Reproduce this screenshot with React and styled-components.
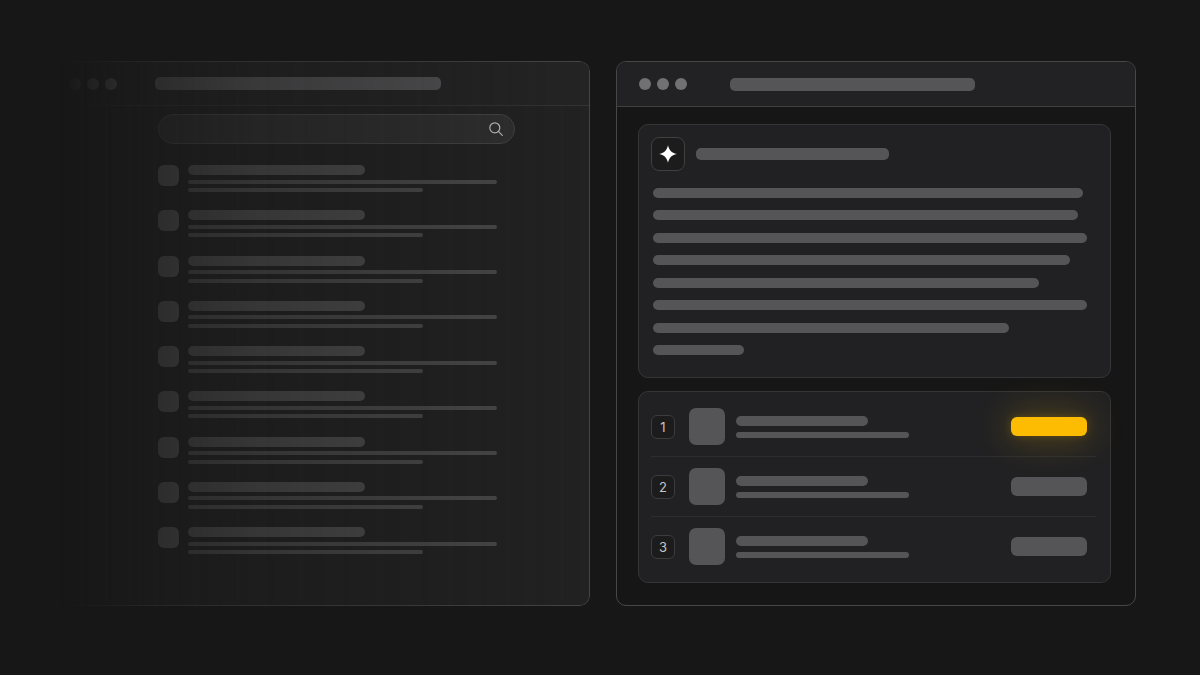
import React from "react";
import styled, { createGlobalStyle } from "styled-components";

const GlobalStyle = createGlobalStyle`
  *, *::before, *::after { box-sizing: border-box; }
  body {
    margin: 0;
    background: #171717;
    color: #c4c4c4;
    font-family: Inter, "Liberation Sans", sans-serif;
  }
`;

const Page = styled.main`
  min-height: 100vh;
  padding: 61px 64px 69px 44px;
  display: grid;
  grid-template-columns: 21fr 20fr;
  align-items: stretch;
  gap: 26px;
`;

const Window = styled.section`
  min-width: 0;
  display: flex;
  flex-direction: column;
  border: 1px solid #474747;
  border-radius: 10px;
  background: #161616;
  overflow: hidden;
`;

const FadedWindow = styled(Window)`
  background: #222222;
  border-color: #454545;
  mask-image: linear-gradient(
    to right,
    transparent 3%,
    rgba(0, 0, 0, 0.34) 20%,
    rgba(0, 0, 0, 0.55) 38%,
    rgba(0, 0, 0, 0.76) 72%,
    #000 100%
  );
`;

const TitleBar = styled.header`
  height: ${(p) => p.$height}px;
  padding: 0 ${(p) => p.$inset}px;
  display: flex;
  align-items: center;
  gap: ${(p) => p.$gap}px;
  background: ${(p) => p.$background};
  border-bottom: 1px solid ${(p) => p.$line};
`;

const Dots = styled.div`
  display: flex;
  gap: 6px;
`;

const Dot = styled.span`
  width: 12px;
  height: 12px;
  border-radius: 50%;
  background: #717173;
`;

const Bar = styled.div`
  width: ${(p) => p.$width};
  max-width: 100%;
  height: ${(p) => p.$height}px;
  border-radius: 5px;
  background: ${(p) => p.$color || "#555557"};
`;

const ResultsBody = styled.div`
  flex: 1;
  display: flex;
  flex-direction: column;
  gap: 21px;
  padding: 8px 74px 51px 113px;
`;

const SearchBox = styled.label`
  height: 30px;
  display: flex;
  align-items: center;
  padding: 0 11px 0 16px;
  border: 1px solid #464646;
  border-radius: 15px;
  background: #303030;
  color: #c8c8c8;
`;

const SearchInput = styled.input`
  flex: 1;
  min-width: 0;
  border: 0;
  outline: 0;
  padding: 0;
  background: transparent;
  color: inherit;
  font: inherit;
  font-size: 13px;
`;

const ResultList = styled.ul`
  flex: 1;
  margin: 0;
  padding: 0;
  list-style: none;
  display: flex;
  flex-direction: column;
  justify-content: space-between;
`;

const Result = styled.li`
  height: 27px;
  display: flex;
  align-items: flex-start;
  gap: 9px;
  padding-right: 18px;
`;

const Favicon = styled.span`
  flex: none;
  width: 21px;
  height: 21px;
  border-radius: 6px;
  background: #575757;
`;

const ResultLines = styled.div`
  flex: 1;
  height: 27px;
  display: flex;
  flex-direction: column;
  justify-content: space-between;
`;

const AnswerBody = styled.div`
  flex: 1;
  display: flex;
  flex-direction: column;
  gap: 13px;
  padding: 17px 24px 22px 21px;
`;

const Card = styled.section`
  border: 1px solid #353536;
  border-radius: 10px;
  background: #212123;
`;

const AnswerCard = styled(Card)`
  padding: 12px 12px 22px;
`;

const AnswerHeading = styled.div`
  display: flex;
  align-items: center;
  gap: 11px;
`;

const SparkBox = styled.span`
  flex: none;
  width: 34px;
  height: 34px;
  display: grid;
  place-items: center;
  border: 1px solid #404042;
  border-radius: 8px;
  background: #1c1c1d;
`;

const AnswerLines = styled.div`
  height: 167px;
  margin: 17px 11px 0 2px;
  display: flex;
  flex-direction: column;
  justify-content: space-between;
`;

const ProductList = styled(Card).attrs({ as: "ol" })`
  margin: 0;
  padding: 5px 14px 5px 12px;
  list-style: none;
`;

const Product = styled.li`
  height: 60px;
  display: flex;
  align-items: center;
  padding-right: 9px;
  border-bottom: 1px solid #2d2d2f;

  &:last-child {
    border-bottom-color: transparent;
  }
`;

const Rank = styled.span`
  flex: none;
  width: 24px;
  height: 24px;
  margin-right: 14px;
  display: grid;
  place-items: center;
  border: 1px solid #3c3c3e;
  border-radius: 6px;
  background: #1c1c1d;
  font-size: 13px;
  line-height: 16px;
`;

const Thumbnail = styled.span`
  flex: none;
  width: 36px;
  height: 37px;
  margin-right: 11px;
  border-radius: 7px;
  background: #555557;
`;

const ProductLines = styled.div`
  flex: 1;
  min-width: 0;
  display: flex;
  flex-direction: column;
  gap: 6px;
`;

const ActionButton = styled.button`
  flex: none;
  width: 76px;
  height: 19px;
  padding: 0;
  border: 0;
  border-radius: 6px;
  background: ${(p) => (p.$primary ? "#fdbc02" : "#555557")};
  box-shadow: ${(p) =>
    p.$primary
      ? "0 0 8px rgba(253, 188, 2, 0.2), 0 0 36px 4px rgba(253, 188, 2, 0.24)"
      : "none"};
`;

const answerWidths = ["99%", "98%", "100%", "96%", "89%", "100%", "82%", "21%"];
const results = [1, 2, 3, 4, 5, 6, 7, 8, 9];
const products = [1, 2, 3];

function WindowDots() {
  return (
    <Dots aria-hidden="true">
      <Dot />
      <Dot />
      <Dot />
    </Dots>
  );
}

function SearchIcon() {
  return (
    <svg width="14" height="14" viewBox="0 0 14 14" fill="none" stroke="currentColor" strokeWidth="1.2" strokeLinecap="round" aria-hidden="true">
      <circle cx="5.8" cy="5.8" r="5" />
      <path d="M9.4 9.4 13.3 13.3" />
    </svg>
  );
}

function SparkIcon() {
  return (
    <svg width="18" height="18" viewBox="0 0 18 18" fill="#fff" aria-hidden="true">
      <path d="M9 0.2C10.2 5.2 12.2 7.6 17.8 9C12.2 10.4 10.2 12.8 9 17.8C7.8 12.8 5.8 10.4 0.2 9C5.8 7.6 7.8 5.2 9 0.2Z" />
    </svg>
  );
}

export default function App() {
  return (
    <>
      <GlobalStyle />
      <Page>
        <FadedWindow aria-label="Search results">
          <TitleBar $height={44} $inset={24} $gap={38} $background="#242424" $line="#333333">
            <WindowDots />
            <Bar $width="286px" $height={13} />
          </TitleBar>
          <ResultsBody>
            <SearchBox>
              <SearchInput type="search" aria-label="Search" />
              <SearchIcon />
            </SearchBox>
            <ResultList>
              {results.map((n) => (
                <Result key={n}>
                  <Favicon />
                  <ResultLines>
                    <Bar $width="177px" $height={10} $color="#505050" />
                    <Bar $width="309px" $height={4} $color="#4c4c4c" />
                    <Bar $width="235px" $height={4} $color="#4c4c4c" />
                  </ResultLines>
                </Result>
              ))}
            </ResultList>
          </ResultsBody>
        </FadedWindow>

        <Window aria-label="Answer">
          <TitleBar $height={45} $inset={22} $gap={43} $background="#222224" $line="#404040">
            <WindowDots />
            <Bar $width="245px" $height={13} />
          </TitleBar>
          <AnswerBody>
            <AnswerCard>
              <AnswerHeading>
                <SparkBox>
                  <SparkIcon />
                </SparkBox>
                <Bar $width="193px" $height={12} />
              </AnswerHeading>
              <AnswerLines>
                {answerWidths.map((width, i) => (
                  <Bar key={i} $width={width} $height={10} />
                ))}
              </AnswerLines>
            </AnswerCard>
            <ProductList>
              {products.map((n) => (
                <Product key={n}>
                  <Rank>{n}</Rank>
                  <Thumbnail />
                  <ProductLines>
                    <Bar $width="132px" $height={10} />
                    <Bar $width="173px" $height={6} />
                  </ProductLines>
                  <ActionButton type="button" $primary={n === 1} aria-label={`Open item ${n}`} />
                </Product>
              ))}
            </ProductList>
          </AnswerBody>
        </Window>
      </Page>
    </>
  );
}
